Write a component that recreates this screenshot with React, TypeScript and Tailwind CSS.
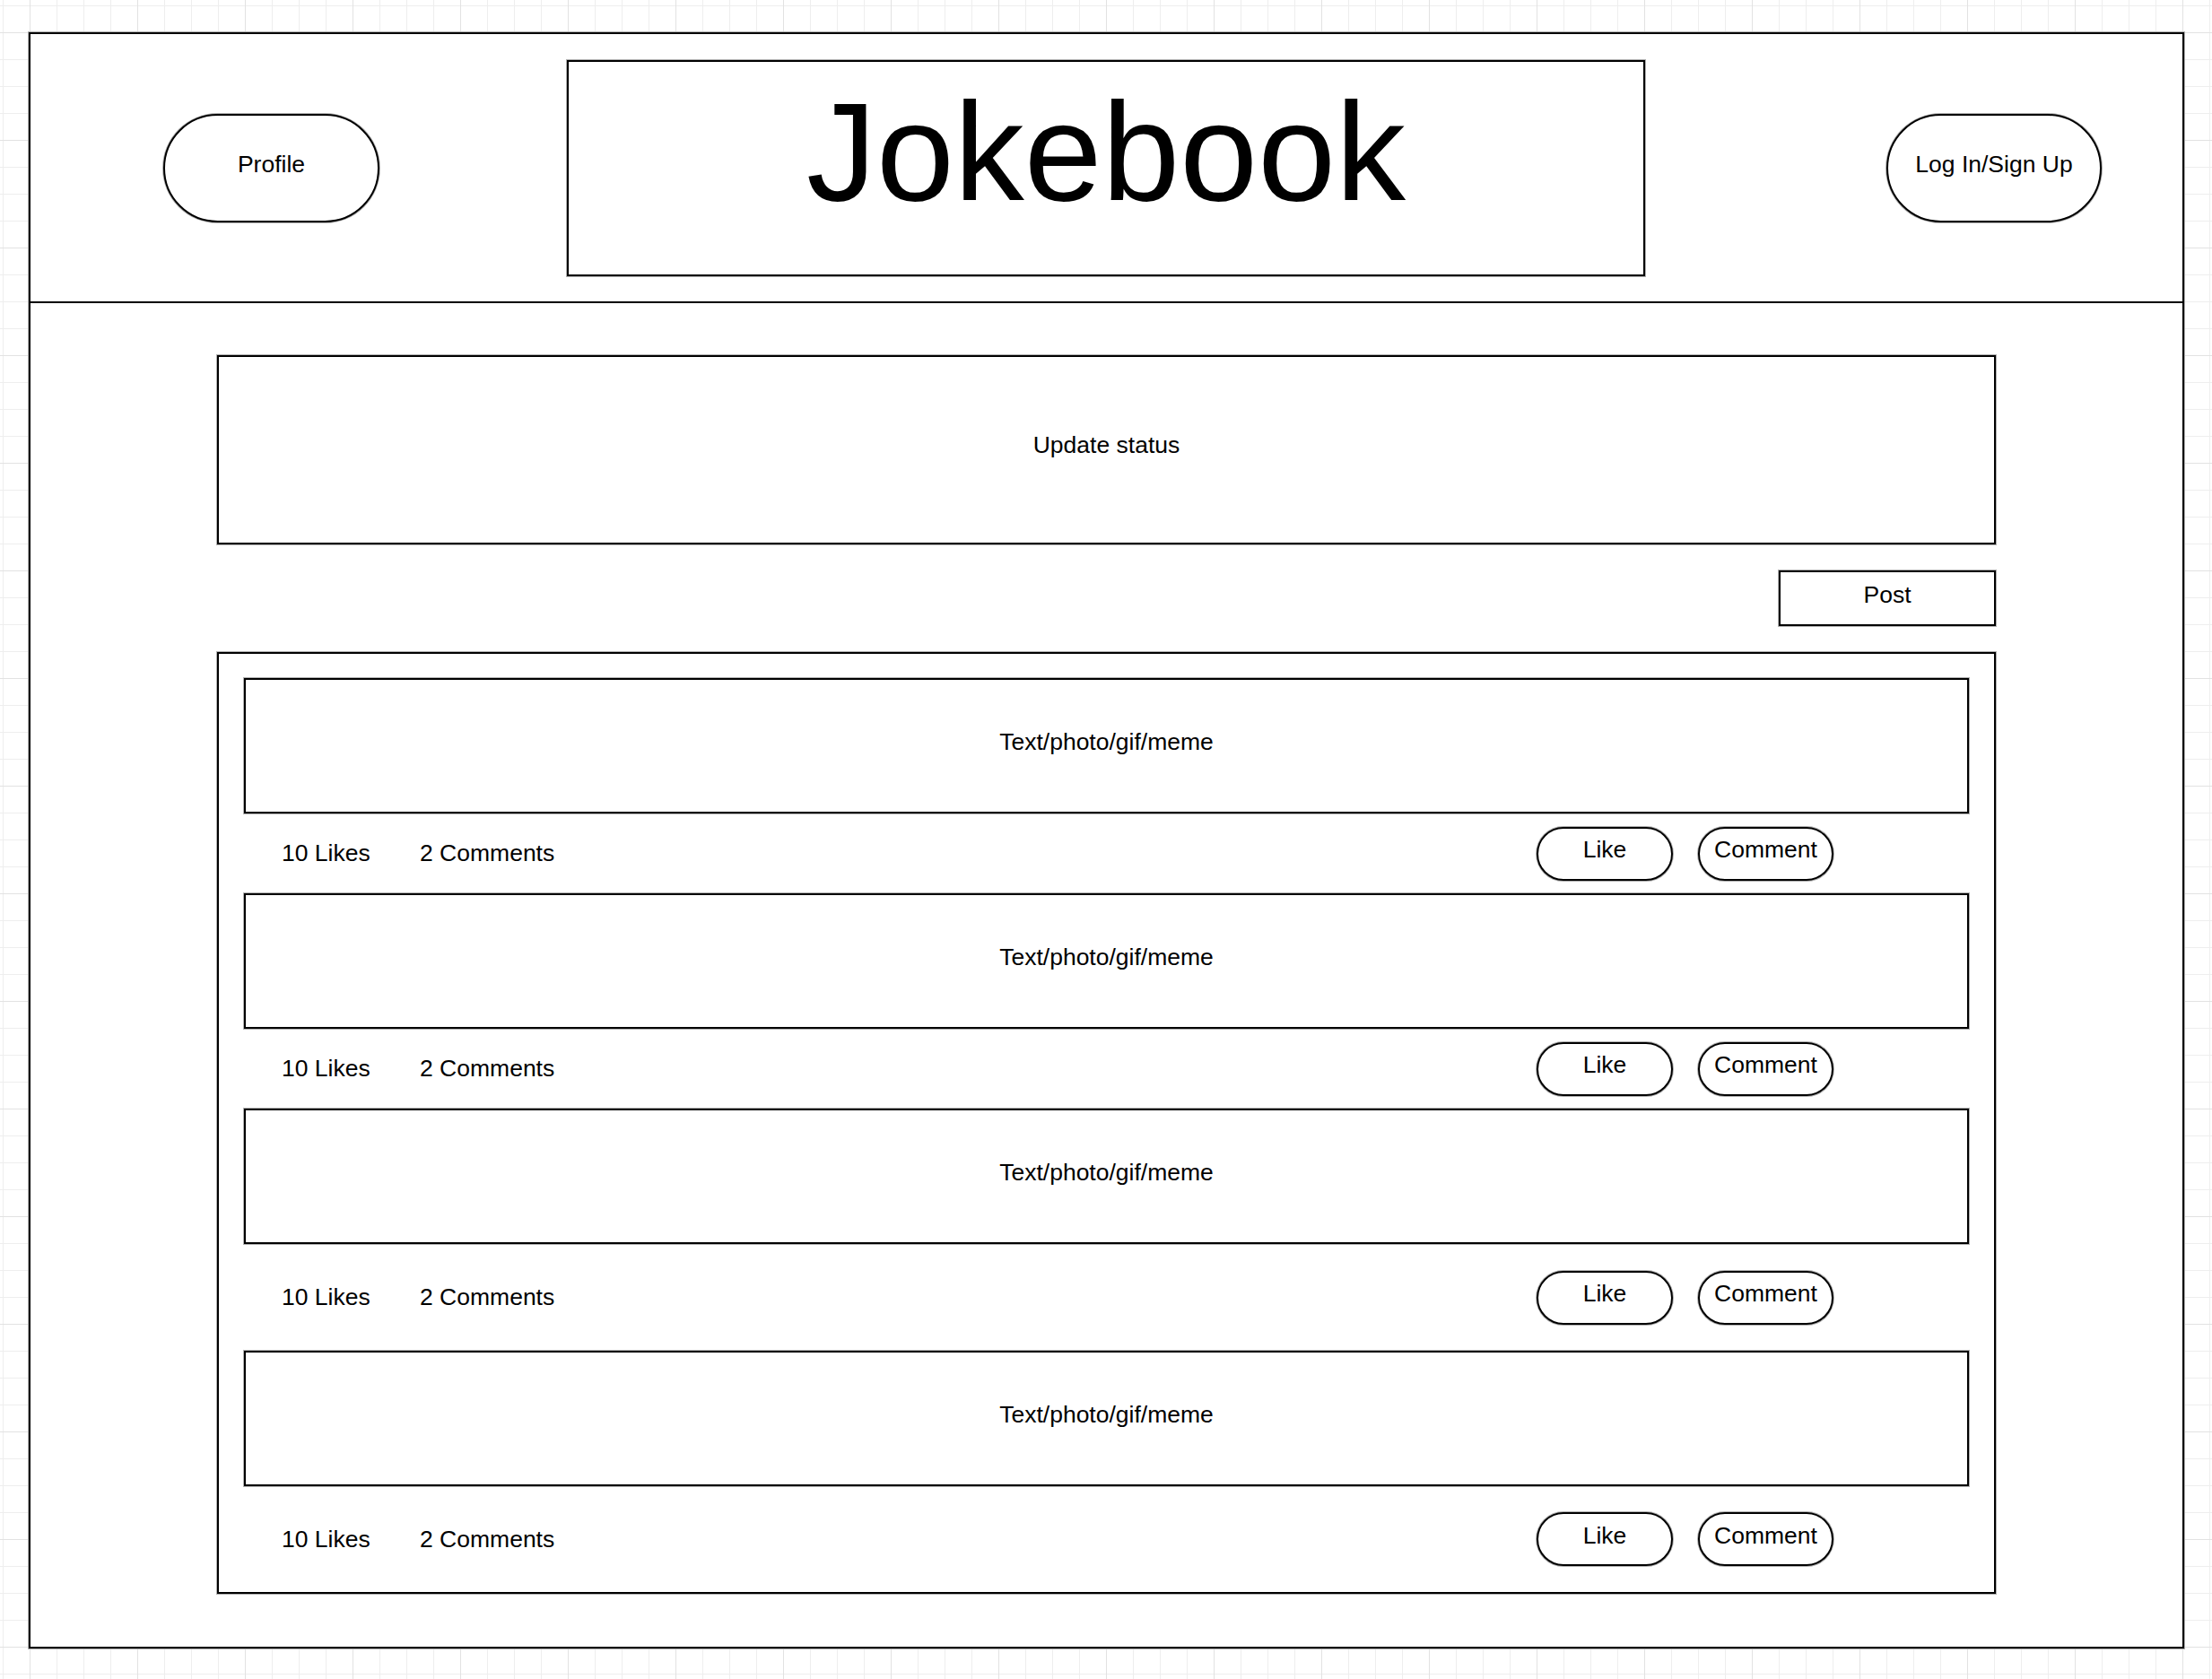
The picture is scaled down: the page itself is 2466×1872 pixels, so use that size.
const posts = [
  { likes: 10, comments: 2, gap: "h-[89px]" },
  { likes: 10, comments: 2, gap: "h-[89px]" },
  { likes: 10, comments: 2, gap: "h-[119px]" },
  { likes: 10, comments: 2, gap: "h-[118px]" },
];

// drawn outline: 2px black stroke with a soft grey edge, like the wireframe tool's lines
const line = "border-2 border-black shadow-[0_0_0_1px_#b0b0b0]";

function Pill({ label, className = "" }: { label: string; className?: string }) {
  return (
    <div
      className={`flex shrink-0 items-center justify-center rounded-full bg-white pb-[8px] ${line} ${className}`}
    >
      {label}
    </div>
  );
}

function PostCard({ likes, comments, gap }: { likes: number; comments: number; gap: string }) {
  return (
    <>
      <div className={`flex h-[151px] items-center justify-center pb-[8px] ${line}`}>
        Text/photo/gif/meme
      </div>
      <div className={`flex items-center ${gap}`}>
        <span className="box-content w-[154px] pl-[42px]">{likes} Likes</span>
        <span>{comments} Comments</span>
        <div className="ml-auto mr-[151px] flex gap-[28px]">
          <Pill label="Like" className="h-[60px] w-[152px]" />
          <Pill label="Comment" className="h-[60px] w-[151px]" />
        </div>
      </div>
    </>
  );
}

export default function App() {
  return (
    <div className="min-h-[1872px] w-full bg-white bg-[linear-gradient(to_right,#e2e2e2_1px,transparent_1px),linear-gradient(to_bottom,#e2e2e2_1px,transparent_1px),linear-gradient(to_right,#eeeeee_1px,transparent_1px),linear-gradient(to_bottom,#eeeeee_1px,transparent_1px)] bg-size-[120px_120px,120px_120px,30px_30px,30px_30px] bg-position-[33px_36px,33px_36px,3px_6px,3px_6px] pl-[32px] pt-[36px] font-['Liberation_Sans',Arial,sans-serif] text-[26.5px] leading-none text-black">
      <div className={`flex h-[1802px] w-[2403px] flex-col bg-white ${line}`}>
        {/* header */}
        <header className="flex h-[300px] shrink-0 items-center border-b-2 border-black">
          <Pill label="Profile" className="ml-[148px] h-[121px] w-[241px]" />
          <div className={`ml-[209px] flex h-[241px] w-[1202px] items-center justify-center pb-[36px] text-[156px] ${line}`}>
            Jokebook
          </div>
          <Pill label="Log In/Sign Up" className="ml-[269px] h-[121px] w-[240px]" />
        </header>

        {/* feed */}
        <main className="flex flex-col px-[208px] pt-[58px]">
          <div className={`flex h-[211px] items-center justify-center pb-[10px] ${line}`}>
            Update status
          </div>
          <button className={`mt-[29px] flex h-[62px] w-[242px] items-center justify-center self-end pb-[8px] ${line}`}>
            Post
          </button>
          <section className={`mt-[29px] flex h-[1050px] flex-col px-[28px] pt-[27px] ${line}`}>
            {posts.map((p, i) => (
              <PostCard key={i} {...p} />
            ))}
          </section>
        </main>
      </div>
    </div>
  );
}
